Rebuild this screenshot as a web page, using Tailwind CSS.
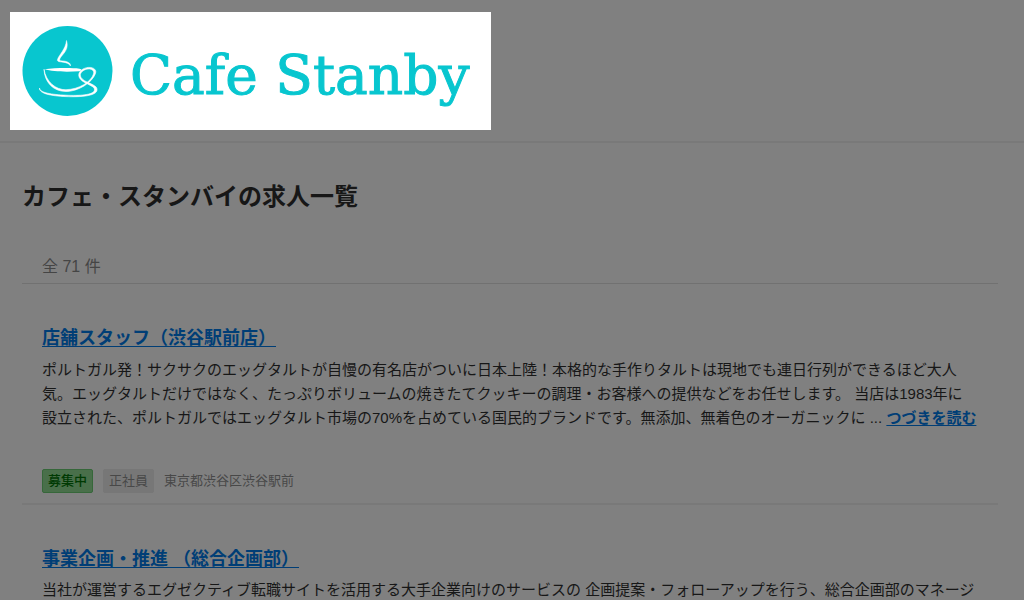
<!DOCTYPE html>
<html lang="ja">
<head>
<meta charset="utf-8">
<meta name="viewport" content="width=device-width, initial-scale=1">
<title>カフェ・スタンバイの求人一覧</title>
<script src="https://cdn.jsdelivr.net/npm/@tailwindcss/browser@4"></script>
</head>
<body class="bg-[#808080] font-['Liberation_Sans','Noto_Sans_CJK_JP',sans-serif] text-[15px] leading-6 text-[#171717] h-screen overflow-hidden">
<header class="border-b-2 border-[#797979] px-[10px] pt-3 pb-[11px]">
  <a href="#" class="flex w-fit items-center gap-[17px] bg-white h-[118px] pl-3 pr-[21px] text-[#08c6cf]">
    <svg class="size-[91px] shrink-0" viewBox="0 0 91 91" aria-hidden="true">
      <circle cx="45.5" cy="45" r="45" fill="#08c6cf"/>
      <g fill="#fff">
        <path stroke="#fff" stroke-width=".5" d="M44.500 14.500C46.500 21 44 25 40.500 29C38.500 31.500 37 33 38 34.700C41.500 35 45 35 47.500 37.200C48.500 38.200 48.700 39.200 48.400 40C47.500 37.500 44.500 36.700 41 36.200C37 35.700 34.600 35.500 35.600 33.200C37 29 43.700 23 44.500 14.500Z"/>
        <path d="M22.500 43.300C32 42 48 41.600 57.500 42.700C60.500 43.100 59.500 45 57 45.200C46 46.100 31 45.900 22.500 43.300Z"/>
        <path stroke="#fff" stroke-width=".6" d="M22 43.300C24 56 34 64 44 63.700C57 63.300 69 56 71.500 48C73 43.500 67 41.500 62 44.200C56 47.600 57.500 52.500 65 56C72 59.200 75.500 60.500 75 64.200C74.200 70 59 71.200 44 70.600C29 70 17 67.600 17.500 62C18 67 30 68.500 44 69.200C57 69.800 71.800 69.200 72.500 64C72.800 61 69 59.800 63 56.700C54.500 52.300 55.500 46 61 43C67.500 39.500 75.500 42 73.500 47.500C70.500 56 57 65.500 44 65.500C31 65.500 22.500 56 22 43.300Z"/>
      </g>
    </svg>
    <span class="pt-2 font-['DejaVu_Serif',serif] text-[55px] leading-none whitespace-nowrap [-webkit-text-stroke:1px_#08c6cf]">Cafe Stanby</span>
  </a>
</header>
<main class="pl-[22px] pr-[26px] pt-9">
  <h1 class="text-2xl leading-9 font-bold">カフェ・スタンバイの求人一覧</h1>
  <p class="mt-[38px] border-b border-[#717171] px-5 pb-[2px] text-base leading-7 text-[#454545]">全 71 件</p>
  <ul>
    <li class="border-b-2 border-[#797979] pl-5 pt-10 pb-[10px]">
      <h2 class="text-lg leading-7 font-bold"><a href="#" class="text-[#003e76] underline [text-decoration-skip-ink:none] decoration-1 underline-offset-2">店舗スタッフ（渋谷駅前店）</a></h2>
      <p class="mt-[6px] whitespace-nowrap">ポルトガル発！サクサクのエッグタルトが自慢の有名店がついに日本上陸！本格的な手作りタルトは現地でも連日行列ができるほど大人<br>気。エッグタルトだけではなく、たっぷりボリュームの焼きたてクッキーの調理・お客様への提供などをお任せします。 当店は1983年に<br>設立された、ポルトガルではエッグタルト市場の70%を占めている国民的ブランドです。無添加、無着色のオーガニックに ... <a href="#" class="font-bold text-[#003e76] underline [text-decoration-skip-ink:none] decoration-1 underline-offset-2">つづきを読む</a></p>
      <div class="mt-[39px] flex items-center gap-[10px] text-[13px] leading-[22px] text-[#484848]">
        <span class="rounded-xs border border-[#36673a] bg-[#496f4a] px-[5px] font-medium text-[#003a03]">募集中</span>
        <span class="rounded-xs border border-[#777777] bg-[#777777] px-[5px]">正社員</span>
        <span>東京都渋谷区渋谷駅前</span>
      </div>
    </li>
    <li class="pl-5 pt-10">
      <h2 class="text-lg leading-7 font-bold"><a href="#" class="text-[#003e76] underline [text-decoration-skip-ink:none] decoration-1 underline-offset-2">事業企画・推進 （総合企画部）</a></h2>
      <p class="mt-[5px] whitespace-nowrap">当社が運営するエグゼクティブ転職サイトを活用する大手企業向けのサービスの 企画提案・フォローアップを行う、総合企画部のマネージ</p>
    </li>
  </ul>
</main>
</body>
</html>
